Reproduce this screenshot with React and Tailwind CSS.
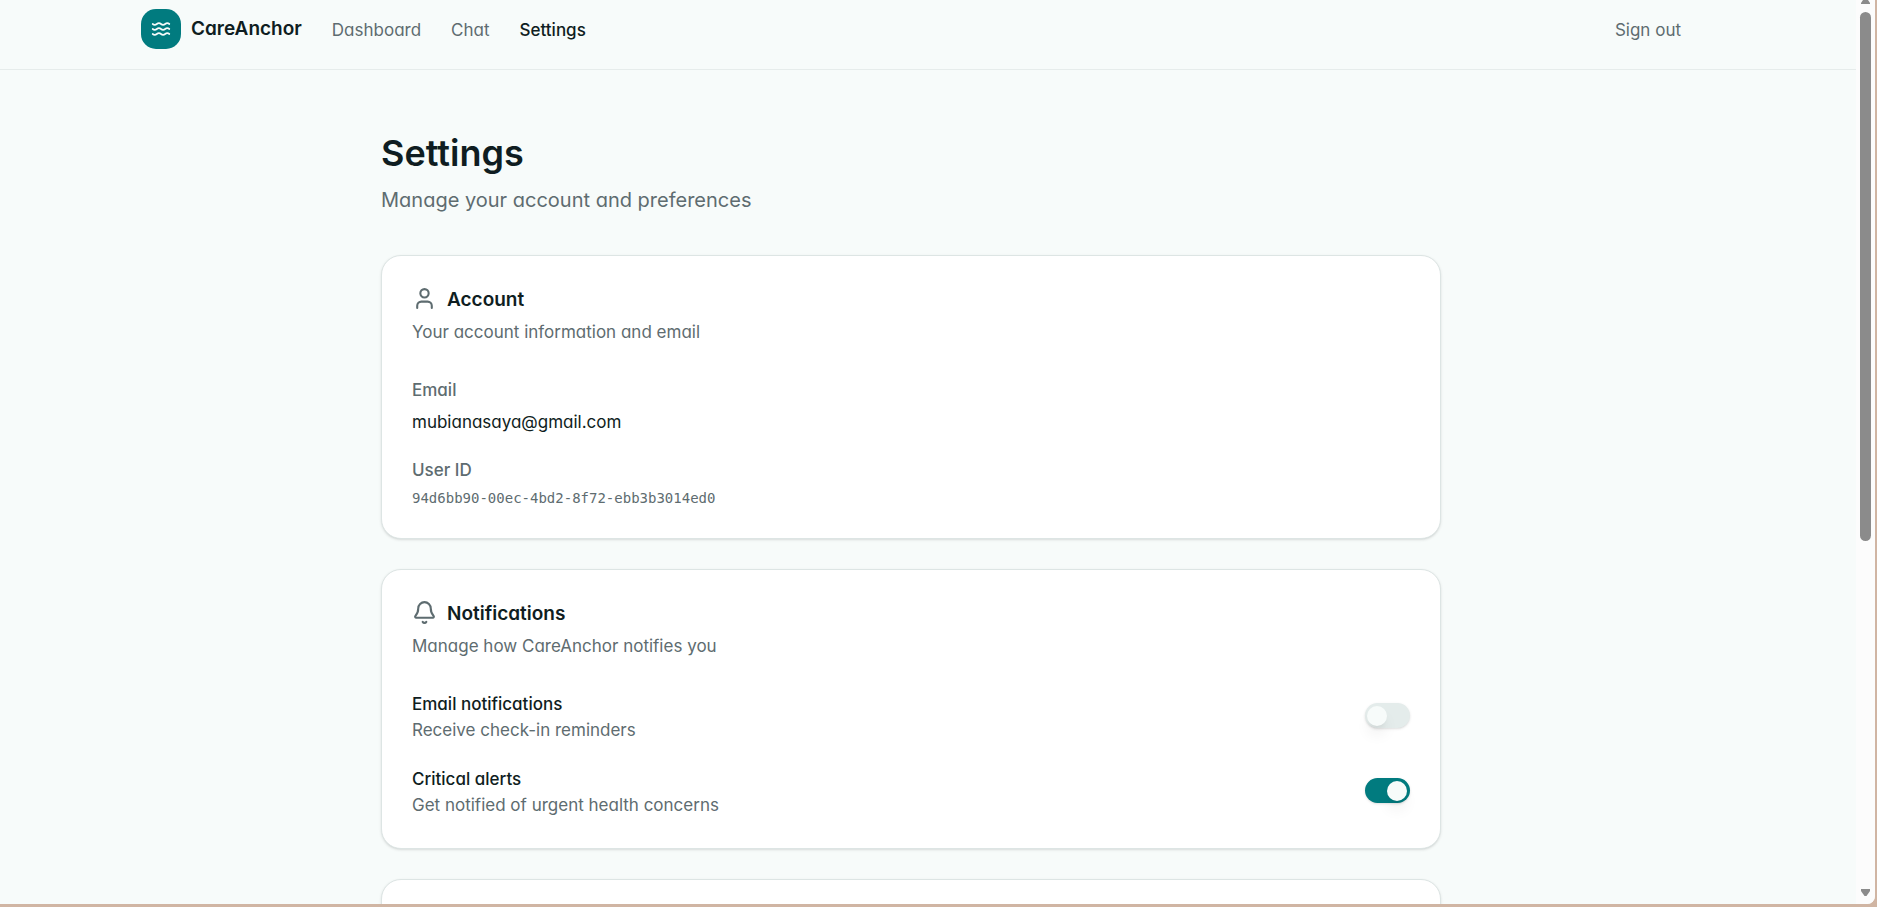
import { useState } from "react";
import { Bell, User, Waves } from "lucide-react";

const navLinks = [
  { label: "Dashboard", href: "#dashboard" },
  { label: "Chat", href: "#chat" },
  { label: "Settings", href: "#settings", active: true },
];

function Header() {
  return (
    <header className="border-b border-[#e6eceb] pt-[9px] pb-5 pr-[34px]">
      <div className="mx-auto flex max-w-[1540px] items-center justify-between">
        <div className="flex items-center gap-[30px]">
          <a href="#home" className="flex items-center gap-2.5">
            <span className="flex size-10 items-center justify-center rounded-[15px] bg-[#017b7f] text-[#f7fbfa]">
              <Waves size={20} />
            </span>
            <span className="text-[19px] leading-[30px] font-semibold">CareAnchor</span>
          </a>
          <nav className="flex items-center gap-[30px] pt-0.5 text-[17px] leading-[26px]">
            {navLinks.map((link) => (
              <a
                key={link.label}
                href={link.href}
                className={link.active ? "font-medium" : "text-[#5e6c70]"}
              >
                {link.label}
              </a>
            ))}
          </nav>
        </div>
        <button type="button" className="pt-0.5 text-[17px] leading-[26px] text-[#5e6c70]">
          Sign out
        </button>
      </div>
    </header>
  );
}

function Card({ icon: Icon, title, description, children }) {
  return (
    <section className="rounded-[20px] border border-[#dde5e4] bg-white p-[30px] shadow-sm">
      <div className="flex items-start gap-2.5">
        <Icon size={25} className="text-[#5e6c70]" />
        <h2 className="text-[19px] leading-[27px] font-semibold">{title}</h2>
      </div>
      <p className="mt-1.5 text-[17px] leading-[26px] text-[#5e6c70]">{description}</p>
      <div className="mt-8">{children}</div>
    </section>
  );
}

function Toggle({ id, label, hint, defaultChecked }) {
  const [checked, setChecked] = useState(defaultChecked);

  return (
    <div className="flex items-start justify-between">
      <div className="text-[17px] leading-[26px]">
        <label htmlFor={id} className="block font-medium">
          {label}
        </label>
        <p className="text-[#5e6c70]">{hint}</p>
      </div>
      <input
        id={id}
        type="checkbox"
        role="switch"
        checked={checked}
        onChange={(e) => setChecked(e.target.checked)}
        className="mt-3 flex h-[25px] w-[45px] cursor-pointer appearance-none items-center rounded-full bg-[#e4eceb] px-0.5 shadow-sm before:size-5 before:rounded-full before:bg-[#f7fbfa] before:shadow-lg checked:bg-[#017b7f] checked:before:translate-x-5"
      />
    </div>
  );
}

function Scrollbar() {
  return (
    <div className="flex w-[19px] shrink-0 flex-col items-center bg-[#fcfcfc]" aria-hidden="true">
      <svg width="9" height="4" viewBox="0 0 9 4" fill="#8b8b8b">
        <path d="M2 0h5l2 3v1H0V3z" />
      </svg>
      <div className="mt-2 h-[529px] w-[11px] rounded-full bg-[#8b8b8b]" />
      <svg className="mt-auto mb-2" width="9" height="7" viewBox="0 0 9 7" fill="#8b8b8b">
        <path d="M0 0h9v2L5.5 7h-2L0 2z" />
      </svg>
    </div>
  );
}

export default function App() {
  return (
    <div className="h-screen bg-[#d0b5a3] pr-0.5 pb-[3px] font-['Inter',sans-serif] text-[#0f1d21] [font-feature-settings:'cv11']">
      <div className="flex h-full overflow-hidden rounded-br-lg bg-[#f7fbfa]">
        <div className="min-w-0 flex-1 overflow-hidden">
          <Header />
          <main className="pr-[34px]">
            <div className="mx-auto max-w-[1060px] pt-[60px]">
              <h1 className="text-[36px] leading-[46px] font-semibold">Settings</h1>
              <p className="mt-[9px] text-[20px] leading-[30px] text-[#5e6c70]">
                Manage your account and preferences
              </p>

              <div className="mt-10 flex flex-col gap-[30px]">
                <Card icon={User} title="Account" description="Your account information and email">
                  <dl className="text-[17px] leading-[26px]">
                    <dt className="font-medium text-[#5e6c70]">Email</dt>
                    <dd className="mt-1.5">mubianasaya@gmail.com</dd>
                    <dt className="mt-[22px] font-medium text-[#5e6c70]">User ID</dt>
                    <dd className="mt-[5px] font-['DejaVu_Sans_Mono',monospace] text-[14px] leading-5 text-[#5e6c70]">
                      94d6bb90-00ec-4bd2-8f72-ebb3b3014ed0
                    </dd>
                  </dl>
                </Card>

                <Card
                  icon={Bell}
                  title="Notifications"
                  description="Manage how CareAnchor notifies you"
                >
                  <div className="flex flex-col gap-[23px]">
                    <Toggle
                      id="email-notifications"
                      label="Email notifications"
                      hint="Receive check-in reminders"
                      defaultChecked={false}
                    />
                    <Toggle
                      id="critical-alerts"
                      label="Critical alerts"
                      hint="Get notified of urgent health concerns"
                      defaultChecked={true}
                    />
                  </div>
                </Card>

                <section className="h-40 rounded-[20px] border border-[#dde5e4] bg-white shadow-sm" />
              </div>
            </div>
          </main>
        </div>
        <Scrollbar />
      </div>
    </div>
  );
}
